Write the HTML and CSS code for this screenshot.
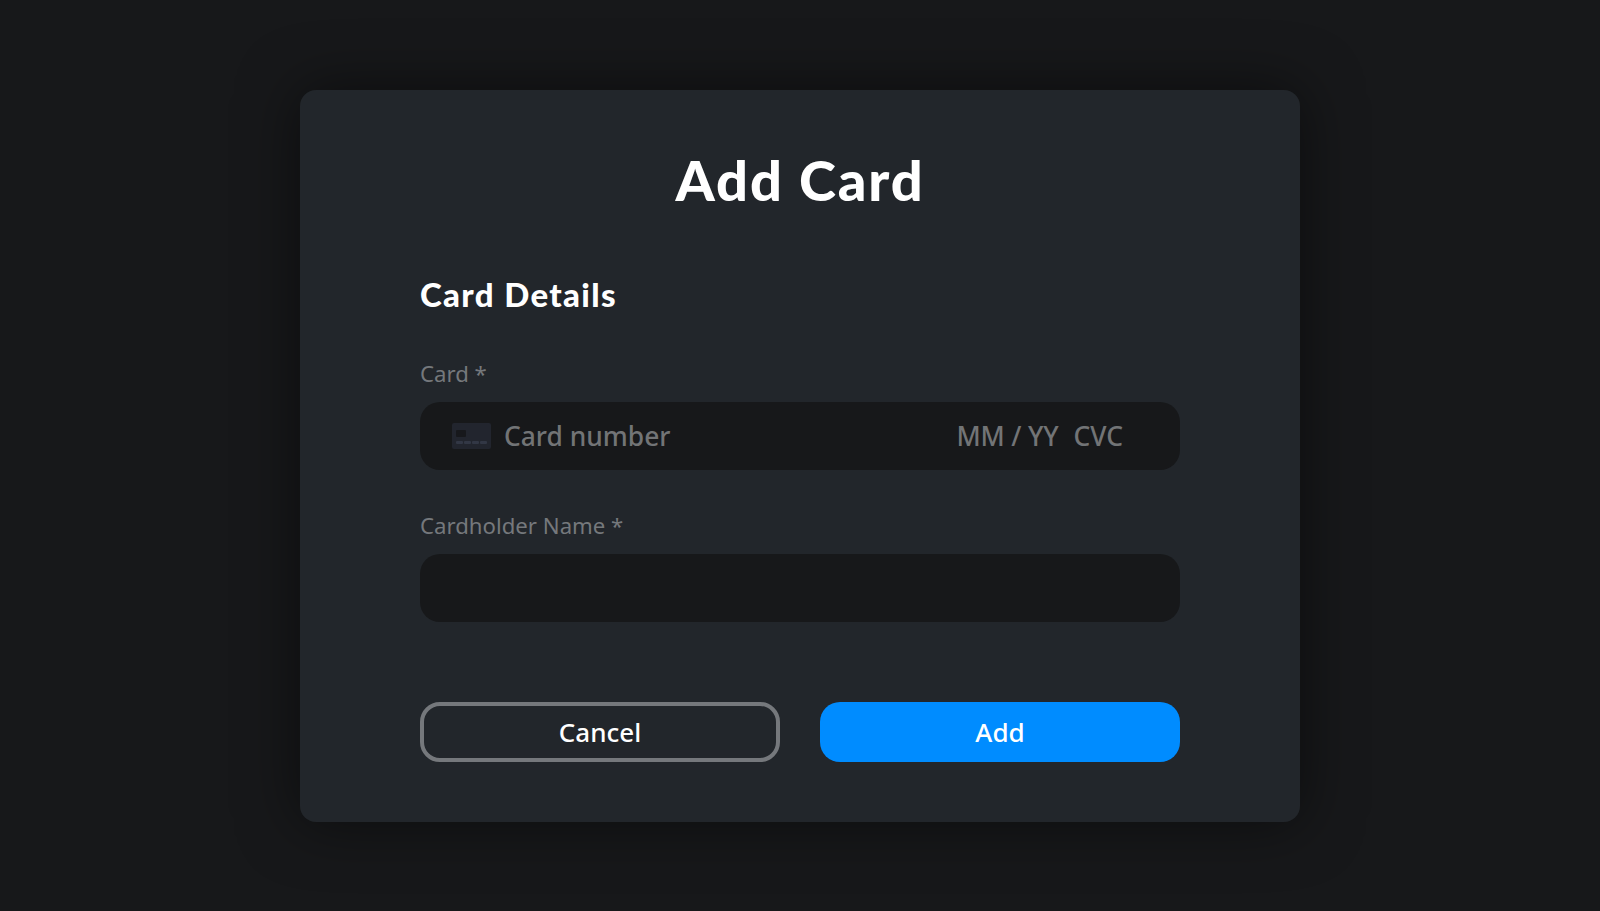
FILE: index.html
```html
<!DOCTYPE html>
<html lang="en">
<head>
<meta charset="utf-8">
<title>Add Card</title>
<link rel="stylesheet" href="styles.css">
</head>
<body>
<div class="modal">
  <h1 class="title">Add Card</h1>
  <h2 class="section">Card Details</h2>
  <div class="field">
    <label class="label">Card *</label>
    <div class="input card-input">
      <svg class="card-icon" width="39" height="26" viewBox="0 0 39 26"><rect width="39" height="26" rx="2" fill="#22252e"/><rect x="4" y="7" width="10" height="7" rx="1" fill="#17181c"/><g fill="#323745"><rect x="4" y="18" width="7" height="3" rx="1"/><rect x="12" y="18" width="7" height="3" rx="1"/><rect x="20" y="18" width="7" height="3" rx="1"/><rect x="28" y="18" width="7" height="3" rx="1"/></g></svg>
      <span class="ph ph-number">Card number</span>
      <span class="ph ph-date">MM / YY</span>
      <span class="ph ph-cvc">CVC</span>
    </div>
  </div>
  <div class="field">
    <label class="label">Cardholder Name *</label>
    <div class="input"></div>
  </div>
  <div class="actions">
    <button class="btn btn-cancel">Cancel</button>
    <button class="btn btn-add">Add</button>
  </div>
</div>
</body>
</html>
```
FILE: styles.css
```css
* { box-sizing: border-box; }
html, body { height: 100%; }
body {
  margin: 0;
  background: #17181a;
  display: flex;
  align-items: center;
  justify-content: center;
  font-family: "Noto Sans", sans-serif;
  overflow: hidden;
}
.modal {
  width: 1000px;
  height: 732px;
  background: #22262b;
  border-radius: 16px;
  padding: 53px 120px 0;
  box-shadow: 0 0 60px rgba(0,0,0,.5);
}
.title {
  margin: 0;
  height: 74px;
  font: 900 56px/74px "Lato", sans-serif;
  letter-spacing: 1.9px;
  color: #fff;
  text-align: center;
}
.section {
  margin: 55px 0 0;
  height: 44px;
  font: 900 33px/44px "Lato", sans-serif;
  letter-spacing: 1.35px;
  color: #fff;
}
.field { margin-top: 42px; }
.field + .field { margin-top: 40px; }
.label {
  display: block;
  height: 32px;
  font-size: 22.2px;
  line-height: 32px;
  color: #75787c;
  margin-bottom: 12px;
}
.input {
  height: 68px;
  background: #17181a;
  border-radius: 20px;
}
.card-input {
  display: flex;
  align-items: center;
  padding: 0 32px;
}
.card-icon { flex: none; }
.ph { font-size: 26.4px; font-weight: 500; color: #727476; white-space: nowrap; padding-top: 1px; }
.ph-number { margin-left: 13px; flex: 1; }
.ph-date { letter-spacing: -0.15px; }
.ph-cvc { margin-left: 15px; margin-right: 25px; }
.actions {
  display: grid;
  grid-template-columns: 1fr 1fr;
  gap: 40px;
  margin-top: 80px;
}
.btn {
  height: 60px;
  border-radius: 20px;
  font: 500 26px "Noto Sans", sans-serif;
  color: #fff;
}
.btn-cancel { background: transparent; border: 4px solid #75787c; }
.btn-add { background: #008cff; border: 0; }
```
